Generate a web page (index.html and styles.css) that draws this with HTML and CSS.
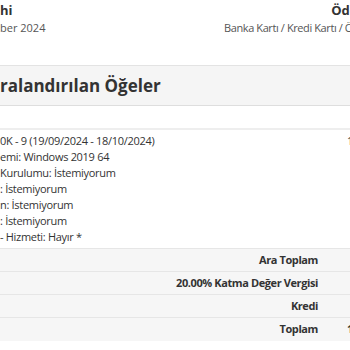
FILE: index.html
```html
<!DOCTYPE html>
<html lang="tr">
<head>
<meta charset="utf-8">
<title>Fatura</title>
<link rel="stylesheet" href="styles.css">
</head>
<body>
<div class="page">
  <div class="info-row">
    <div class="info-col">
      <div class="info-title">hi</div>
      <div class="info-text">ber 2024</div>
    </div>
    <div class="info-col info-right">
      <div class="info-title">Ödeme Yöntemi</div>
      <div class="info-text">Banka Kartı / Kredi Kartı / Önceden Ödemeli Kart</div>
    </div>
  </div>

  <div class="panel">
    <div class="panel-heading">ralandırılan Öğeler</div>
    <table class="items">
      <colgroup><col class="col-desc"><col class="col-amount"></colgroup>
      <thead>
        <tr><td class="desc"></td><td class="amount"></td></tr>
      </thead>
      <tbody>
        <tr class="item">
          <td class="desc">0K - 9 (19/09/2024 - 18/10/2024)<br>emi: Windows 2019 64<br>Kurulumu: İstemiyorum<br>: İstemiyorum<br>n: İstemiyorum<br>: İstemiyorum<br>- Hizmeti: Hayır *</td>
          <td class="amount near">1.250,00 ₺</td>
        </tr>
        <tr class="total"><td class="desc">Ara Toplam</td><td class="amount">1.250,00 ₺</td></tr>
        <tr class="total"><td class="desc">20.00% Katma Değer Vergisi</td><td class="amount">250,00 ₺</td></tr>
        <tr class="total"><td class="desc">Kredi</td><td class="amount">0,00 ₺</td></tr>
        <tr class="total"><td class="desc">Toplam</td><td class="amount near">1.500,00 ₺</td></tr>
      </tbody>
    </table>
    <div class="panel-foot"></div>
  </div>
</div>
</body>
</html>
```
FILE: styles.css
```css
html, body {
  margin: 0;
  padding: 0;
  background: #fff;
  overflow: hidden;
}
body {
  font-family: "Open Sans", "Noto Sans", sans-serif;
  color: #333;
  font-size: 11px;
}
.page {
  width: 480px;
}
.info-row {
  display: grid;
  grid-template-columns: 224px 212px;
  padding-top: 2px;
}
.info-col {
  white-space: nowrap;
}
.info-title {
  font-weight: 700;
  font-size: 13px;
  line-height: 17px;
}
.info-text {
  font-size: 11px;
  line-height: 17px;
  color: #555;
}
.info-right .info-title {
  text-align: right;
}
.info-right .info-text {
  letter-spacing: -0.4px;
}
.panel {
  margin-top: 29px;
  border-top: 1px solid #e3e3e3;
}
.panel-heading {
  background: #f5f5f5;
  border-bottom: 1px solid #dedede;
  font-weight: 700;
  font-size: 17px;
  line-height: 22px;
  padding: 9px 0 8px;
  white-space: nowrap;
}
.items {
  width: 480px;
  table-layout: fixed;
  border-collapse: collapse;
}
.col-desc {
  width: 323px;
}
.items td {
  padding: 3px 5px 3px 0;
  line-height: 16px;
  vertical-align: top;
  white-space: nowrap;
  overflow: hidden;
  letter-spacing: -0.3px;
}
.items thead td {
  height: 16px;
  border-bottom: 2px solid #eeeeee;
}
.items td.amount {
  padding-left: 30px;
  padding-right: 0;
}
.items td.amount.near {
  padding-left: 24px;
}
.item td {
  border-top: 1px solid #f0f0f0;
}
.total td {
  background: #f6f6f6;
  border-top: 1px solid #e6e6e6;
  font-weight: 700;
  letter-spacing: -0.4px;
}
.total td.desc {
  text-align: right;
}
.panel-foot {
  height: 9px;
  border-top: 1px solid #f6f6f6;
  border-bottom: 1px solid #eaeaea;
}
```
